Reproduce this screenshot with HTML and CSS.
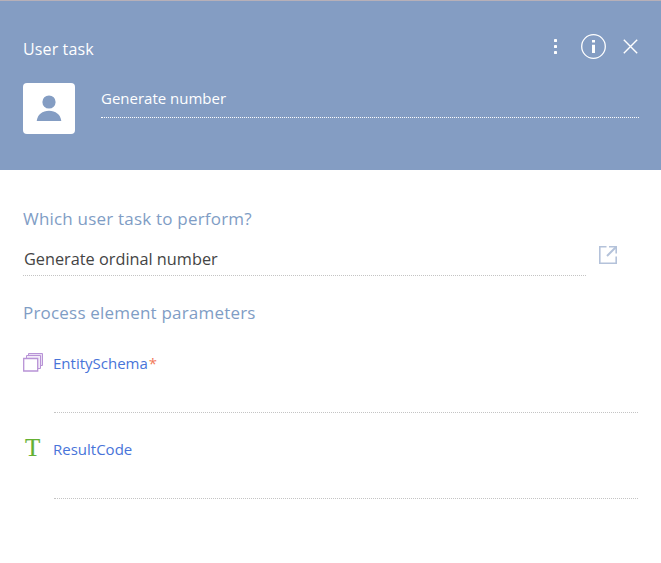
FILE: index.html
```html
<!DOCTYPE html>
<html lang="en">
<head>
<meta charset="utf-8">
<title>User task</title>
<link rel="stylesheet" href="styles.css">
</head>
<body>
<main class="panel">
  <header class="header">
    <div class="topbar">
      <h1 class="title">User task</h1>
      <div class="actions">
        <svg class="more" width="3" height="15" viewBox="0 0 3 15" fill="#fff"><rect width="3" height="3" rx=".4"/><rect y="6" width="3" height="3" rx=".4"/><rect y="12" width="3" height="3" rx=".4"/></svg>
        <svg class="info" width="25" height="25" viewBox="0 0 25 25"><circle cx="12.5" cy="12.5" r="11.800" fill="none" stroke="#fff" stroke-width="1.300"/><path d="M11 6h3v2.500h-3zM11 10.800h3V19h-3z" fill="#fff"/></svg>
        <svg class="close" width="15" height="15" viewBox="0 0 15 15"><path d="M.8.8l13.400 13.400M14.200.8L.8 14.200" fill="none" stroke="#fff" stroke-width="1.400"/></svg>
      </div>
    </div>
    <div class="identity">
      <div class="avatar">
        <svg width="26" height="27" viewBox="0 0 26 27" fill="#849dc3"><circle cx="13" cy="7" r="6.600"/><path d="M.7 26C1.500 19.500 6.500 15.800 13 15.800S24.500 19.500 25.300 26z"/></svg>
      </div>
      <div class="name">Generate number</div>
    </div>
  </header>
  <section class="content">
    <h2 class="label">Which user task to perform?</h2>
    <div class="lookup">
      <div class="value">Generate ordinal number</div>
      <svg class="open" width="20" height="20" viewBox="0 0 20 20" fill="none" stroke="#b4c2da" stroke-width="1.600"><path d="M8.500 1.800H1.800v16.400h16.400V11.500M11 1.800h7.200V8.500"/><path d="M9 11L18 2" stroke-width="2"/></svg>
    </div>
    <h2 class="label params">Process element parameters</h2>
    <div class="param">
      <svg class="entity" width="21" height="20" viewBox="0 0 21 20" fill="#fff" stroke="#b893d6"><path d="M5.500 1.500h14v12h-14z" fill="#e8dcf3"/><path d="M3.500 3.500h14v13h-14z" fill="#f3ecf9"/><path d="M.7 6.500h14v12.500h-14z" stroke-width="1.300"/></svg>
      <div class="field"><span class="caption">EntitySchema</span><span class="required">*</span></div>
    </div>
    <div class="param">
      <span class="text-type">T</span>
      <div class="field"><span class="caption">ResultCode</span></div>
    </div>
  </section>
</main>
</body>
</html>
```
FILE: styles.css
```css
* { box-sizing: border-box; }
body { margin: 0; background: #fff; font-family: "Open Sans", sans-serif; }
h1, h2 { margin: 0; font-weight: 400; }
svg { display: block; flex: none; }
.header { height: 170px; padding: 32px 22px 0 23px; background: #849dc3; border-top: 1px solid #b7b0b8; }
.topbar { display: flex; justify-content: space-between; height: 50px; }
.title { margin-top: 4px; font-size: 16px; line-height: 24px; letter-spacing: .12px; color: #fff; }
.actions { display: flex; align-items: center; height: 27px; }
.info { margin-left: 24px; }
.close { margin: 0 1px 0 17px; }
.identity { display: flex; gap: 26px; }
.avatar { display: flex; justify-content: center; width: 52px; height: 51px; padding-top: 12px; background: #fff; border-radius: 4px; }
.name { flex: 1; height: 35px; padding-top: 3px; border-bottom: 1px dotted #fff; font-size: 15px; line-height: 24px; color: #fff; }
.content { padding: 36px 23px 0; }
.label { font-size: 17px; line-height: 26px; letter-spacing: .2px; color: #7f9dc5; }
.lookup { display: flex; gap: 12px; margin-top: 12px; }
.open { margin-top: 1px; }
.value { width: 563px; height: 32px; padding: 2px 0 0 1px; border-bottom: 1px dotted #c4c4c4; font-size: 16.300px; line-height: 26px; color: #444; }
.params { margin-top: 24px; }
.param { display: flex; height: 61px; margin-top: 25px; }
.label + .param { margin-top: 26px; }
.entity, .text-type { width: 21px; }
.text-type { margin-top: -2px; padding-left: 2px; font: 25px/24px "Liberation Serif", serif; color: #65b032; -webkit-text-stroke: .2px #65b032; }
.field { width: 584px; margin-left: 10px; border-bottom: 1px dotted #c4c4c4; font-size: 15px; line-height: 22px; color: #4874d9; }
.caption { margin-left: -1px; }
.required { margin-left: 1px; color: #f27a5a; }
```
